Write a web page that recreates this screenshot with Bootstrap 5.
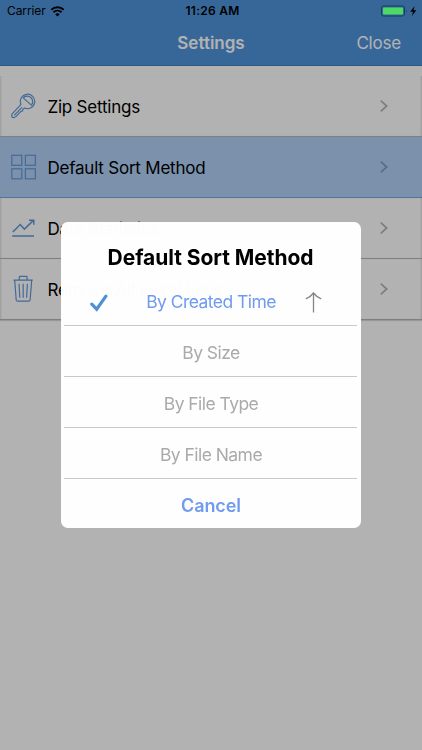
<!DOCTYPE html>
<html lang="en">
<head>
    <meta charset="UTF-8">
    <meta name="viewport" content="width=device-width, initial-scale=1.0">
    <title>Settings</title>
    <link rel="stylesheet" href="https://cdn.jsdelivr.net/npm/bootstrap@5.3.0/dist/css/bootstrap.min.css">
    <style>
        body { font-family: Inter, "Liberation Sans", sans-serif; font-size: 17px; background-color: #fff; height: 100vh; overflow: hidden; color: #000; }
        svg { display: block; fill: none; flex-shrink: 0; }
        .top-area { background: #4f94db; height: 66px; border-bottom: 1px solid #3f7fc4; }
        .three-cols { display: grid; grid-template-columns: 1fr auto 1fr; }
        .status-bar { height: 22px; font-size: 12px; line-height: 22px; padding: 0 5px 0 7px; position: relative; z-index: 2; }
        .carrier { letter-spacing: -0.1px; }
        .clock { font-weight: 600; letter-spacing: 0.25px; padding-left: 1px; }
        .title-bar { height: 43px; line-height: 43px; color: #fff; }
        .page-title { font-weight: 600; letter-spacing: 0; }
        .close-link { letter-spacing: -0.2px; padding-right: 21px; }
        .settings-list { padding-top: 10px; }
        .setting-row { height: 61px; padding: 0 34px 0 11px; border-bottom: 1px solid #b6b6b6; background: #fff; letter-spacing: -0.22px; box-shadow: inset 2px 0 2px -1px #ddd, inset -2px 0 2px -1px #ddd, 0 1px 1px rgba(0, 0, 0, .15); }
        .setting-row span { padding-top: 3px; }
        .setting-row.selected { background: #b1d0f7; border-bottom-color: #7ba6dc; box-shadow: none; }
        .setting-row .row-icon { stroke: #6398d6; width: 25px; margin-right: 11.5px; }
        .setting-row .chevron { stroke: #b4b4b4; }
        .setting-row.selected .chevron { stroke: #839db9; }
        .dim { position: absolute; inset: 0; background: rgba(0, 0, 0, .3); }
        .sort-box { width: 300px; margin: 0 auto; min-height: 100%; }
        .sort-box .modal-content { height: 306px; border: 0; border-radius: 7px; background: rgba(255, 255, 255, .987); padding: 0 4px 0 3px; }
        .sort-title { height: 53px; padding-top: 21px; font-size: 21px; line-height: 30px; font-weight: 700; letter-spacing: -0.05px; }
        .sort-option { height: 51px; border-bottom: 1px solid #c9c9c9; color: #aaa; font-size: 17.5px; letter-spacing: -0.55px; padding: 5px 0 0 1px; }
        .sort-option.chosen { color: #6f9bee; padding: 5px 35px 0 26px; }
        .sort-option.chosen span { padding-left: 9px; }
        .cancel-link { height: 49px; padding: 4px 0 0 1px; color: #6f9bee; font-size: 18px; font-weight: 600; letter-spacing: -0.1px; }
    </style>
</head>
<body>
    <div class="top-area">
        <div class="status-bar three-cols">
            <div class="d-flex align-items-center">
                <span class="carrier">Carrier</span>
                <svg class="ms-1" width="15" height="11" viewBox="0 0 14 11">
                    <path d="M0.8 3.8a9 9 0 0 1 12.4 0M3 6.2a5.9 5.9 0 0 1 8 0" stroke="#000" stroke-width="1.9"/>
                    <path d="M4.8 8.2a3.2 3.2 0 0 1 4.4 0L7 10.5z" fill="#000"/>
                </svg>
            </div>
            <span class="clock">11:26 AM</span>
            <div class="d-flex align-items-center justify-content-end">
                <svg width="36" height="12" viewBox="0 0 36 12">
                    <rect x="0.5" y="1" width="23" height="10" rx="2" stroke="#183d63"/>
                    <rect x="2" y="2.5" width="20" height="7" rx="1" fill="#4cd964"/>
                    <path d="M25 4.3q1.4 1.7 0 3.4z" fill="#183d63"/>
                    <path d="M33.5 1L29.3 6.7H32L31 11L35.3 5.2H32.6z" fill="#000"/>
                </svg>
            </div>
        </div>
        <div class="title-bar three-cols">
            <span></span>
            <span class="page-title">Settings</span>
            <span class="close-link text-end">Close</span>
        </div>
    </div>

    <div class="settings-list">
        <div class="setting-row d-flex align-items-center">
            <svg class="row-icon" width="25" height="26" viewBox="0 0 25 26" stroke-width="1.2" stroke-linejoin="round">
                <path d="M10 11.4A7.2 7.2 0 1 1 13.6 15L12 16.2L11.4 18L9.6 18.6L5.2 23.4Q3.4 24.9 1.4 24.4Q0.2 22.6 1.2 20.8Z"/>
                <path d="M12.2 4.9A5.2 5.2 0 0 1 20.3 12.1Z"/>
                <path d="M3.2 22.4L11 14.4"/>
            </svg>
            <span>Zip Settings</span>
            <svg class="chevron ms-auto" width="8" height="12" viewBox="0 0 8 12" stroke-width="1.7"><path d="M0.8 0.7L6.7 6L0.8 11.3"/></svg>
        </div>
        <div class="setting-row selected d-flex align-items-center">
            <svg class="row-icon" width="25" height="26" viewBox="0 0 25 26" stroke-width="1.2">
                <rect x="0.8" y="1.3" width="10" height="10"/><rect x="14.4" y="1.3" width="10" height="10"/>
                <rect x="0.8" y="14.8" width="10" height="10"/><rect x="14.4" y="14.8" width="10" height="10"/>
            </svg>
            <span>Default Sort Method</span>
            <svg class="chevron ms-auto" width="8" height="12" viewBox="0 0 8 12" stroke-width="1.7"><path d="M0.8 0.7L6.7 6L0.8 11.3"/></svg>
        </div>
        <div class="setting-row d-flex align-items-center">
            <svg class="row-icon" width="25" height="26" viewBox="0 0 25 26" stroke-width="1.5">
                <path d="M1.2 21.1H23M1.8 17.1L9.2 9.5L13.4 14.1L22.4 5.4M18 5.2H22.8V9.8"/>
            </svg>
            <span>Data Statistics</span>
            <svg class="chevron ms-auto" width="8" height="12" viewBox="0 0 8 12" stroke-width="1.7"><path d="M0.8 0.7L6.7 6L0.8 11.3"/></svg>
        </div>
        <div class="setting-row d-flex align-items-center">
            <svg class="row-icon" width="25" height="28" viewBox="0 0 25 28" stroke-width="1.2">
                <path d="M2.5 5.2H21.8M8.3 5V2.2Q8.3 1.4 9.2 1.4H15.2Q16.1 1.4 16.1 2.2V5M3.7 5.2L5.2 25Q5.4 26.2 6.6 26.2H17.7Q18.9 26.2 19.1 25L20.7 5.2"/>
                <path d="M8 8.8L8.8 22.8M12.2 8.8V22.8M16.4 8.8L15.6 22.8"/>
            </svg>
            <span>Remove All Local Files</span>
            <svg class="chevron ms-auto" width="8" height="12" viewBox="0 0 8 12" stroke-width="1.7"><path d="M0.8 0.7L6.7 6L0.8 11.3"/></svg>
        </div>
    </div>

    <div class="dim"></div>

    <div class="modal d-block" tabindex="-1">
        <div class="modal-dialog modal-dialog-centered sort-box">
            <div class="modal-content">
                <div class="sort-title text-center">Default Sort Method</div>
                <div class="sort-option chosen d-flex align-items-center justify-content-between">
                    <svg width="18" height="18" viewBox="0 0 18 18"><path d="M1.8 10.2L6.7 15.2L15.9 2.2" stroke="#4f90d9" stroke-width="3.2" stroke-linecap="round"/></svg>
                    <span>By Created Time</span>
                    <svg width="17" height="21" viewBox="0 0 17 21"><path d="M8.5 20.5V1M0.8 6.8Q5.8 4.8 8.5 1Q11.2 4.8 16.2 6.8" stroke="#858585" stroke-width="1.3"/></svg>
                </div>
                <div class="sort-option d-flex align-items-center justify-content-center">By Size</div>
                <div class="sort-option d-flex align-items-center justify-content-center">By File Type</div>
                <div class="sort-option d-flex align-items-center justify-content-center">By File Name</div>
                <div class="cancel-link d-flex align-items-center justify-content-center">Cancel</div>
            </div>
        </div>
    </div>

    <script src="https://cdn.jsdelivr.net/npm/bootstrap@5.3.0/dist/js/bootstrap.bundle.min.js"></script>
</body>
</html>
